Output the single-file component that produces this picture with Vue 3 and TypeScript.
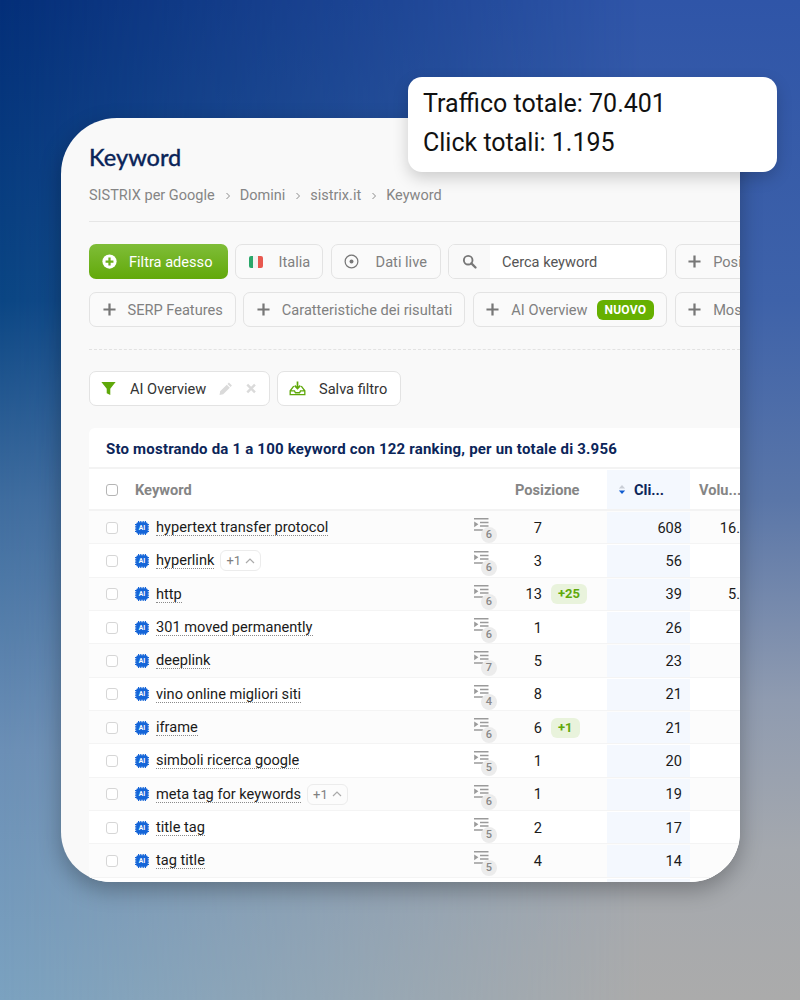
<template>
  <div class="page">
    <div class="tooltip">
      <div>Traffico totale: 70.401</div>
      <div>Click totali: 1.195</div>
    </div>

    <div class="card">
      <h1 class="title">Keyword</h1>
      <div class="crumbs">
        <template v-for="(c, i) in crumbs" :key="c">
          <svg v-if="i > 0" class="crumb-sep" viewBox="0 0 6 8"><path d="M1.5 1 4.5 4 1.5 7" /></svg>
          <span>{{ c }}</span>
        </template>
      </div>
      <div class="rule"></div>

      <div class="btn-row first">
        <button class="btn green">
          <svg class="ic" viewBox="0 0 16 16"><circle cx="8" cy="8" r="7.6" fill="#fff" /><path d="M8 3.8v8.4M3.8 8h8.4" stroke="#6cb01a" stroke-width="2.4" /></svg>
          Filtra adesso
        </button>
        <button class="btn w-italia">
          <span class="flag"><i class="fg"></i><i class="fw"></i><i class="fr"></i></span>
          Italia
        </button>
        <button class="btn w-live">
          <svg class="ic live" viewBox="0 0 16 16"><circle cx="8" cy="8" r="6.8" fill="none" stroke="#777" stroke-width="1.3" /><circle cx="8" cy="8" r="2.1" fill="#777" /></svg>
          Dati live
        </button>
        <div class="search">
          <div class="search-ic">
            <svg viewBox="0 0 16 16" width="15" height="15"><circle cx="6.6" cy="6.6" r="4.6" fill="none" stroke="#777" stroke-width="2" /><path d="M10 10l4.4 4.4" stroke="#777" stroke-width="2.4" stroke-linecap="round" /></svg>
          </div>
          <span>Cerca keyword</span>
        </div>
        <button class="btn">
          <svg class="ic plus" viewBox="0 0 14 14"><path d="M7 .5v13M.5 7h13" stroke="#777" stroke-width="2.4" /></svg>
          Posizione
        </button>
      </div>

      <div class="btn-row second">
        <button class="btn">
          <svg class="ic plus" viewBox="0 0 14 14"><path d="M7 .5v13M.5 7h13" stroke="#777" stroke-width="2.4" /></svg>
          SERP Features
        </button>
        <button class="btn">
          <svg class="ic plus" viewBox="0 0 14 14"><path d="M7 .5v13M.5 7h13" stroke="#777" stroke-width="2.4" /></svg>
          Caratteristiche dei risultati
        </button>
        <button class="btn">
          <svg class="ic plus" viewBox="0 0 14 14"><path d="M7 .5v13M.5 7h13" stroke="#777" stroke-width="2.4" /></svg>
          AI Overview
          <span class="nuovo">NUOVO</span>
        </button>
        <button class="btn">
          <svg class="ic plus" viewBox="0 0 14 14"><path d="M7 .5v13M.5 7h13" stroke="#777" stroke-width="2.4" /></svg>
          Mostra
        </button>
      </div>

      <div class="dashed"></div>

      <div class="btn-row chips">
        <div class="btn chip">
          <svg class="ic funnel" viewBox="0 0 16 16"><path d="M.4 1h15.2L9.9 8.2V15L6.1 13V8.2z" fill="#5fa80a" /></svg>
          <span class="chip-label">AI Overview</span>
          <svg class="tool pencil" viewBox="0 0 16 16"><path d="M11.3 1.2l3.5 3.5-1.6 1.6-3.5-3.5zM8.9 3.6l3.5 3.5-7.6 7.6-4.2.8.7-4.3z" fill="#dadada" /></svg>
          <svg class="tool cross" viewBox="0 0 12 12"><path d="M1.5 1.5l9 9M10.5 1.5l-9 9" stroke="#dadada" stroke-width="2.8" /></svg>
        </div>
        <div class="btn chip save">
          <svg class="ic inbox" viewBox="0 0 18 16"><path d="M9 .5v7M6 5l3 3 3-3" fill="none" stroke="#5fa80a" stroke-width="1.8" /><path d="M5 5.5 1.2 10.5v4h15.6v-4L13 5.5M1.2 10.5h4.6l1 2h4.4l1-2h4.6" fill="none" stroke="#5fa80a" stroke-width="1.4" /></svg>
          <span class="chip-label">Salva filtro</span>
        </div>
      </div>

      <div class="table">
        <div class="table-title">Sto mostrando da 1 a 100 keyword con 122 ranking, per un totale di 3.956</div>
        <div class="row head">
          <div class="c-check"><span class="box head-box"></span></div>
          <div class="c-kw">Keyword</div>
          <div class="c-list"></div>
          <div class="c-pos head-pos">Posizione</div>
          <div class="c-clicks head-clicks">
            <svg class="sort" viewBox="0 0 9 12"><path d="M4.5 1 8 5H1z" fill="#c9ced6" /><path d="M4.5 11 8 7H1z" fill="#0f5bd0" /></svg>
            <span>Cli...</span>
          </div>
          <div class="c-vol head-vol">Volu...</div>
        </div>
        <div v-for="(r, i) in rows" :key="r.kw" class="row" :class="{ alt: i % 2 === 0 }">
          <div class="c-check"><span class="box"></span></div>
          <div class="c-kw">
            <svg class="ai" viewBox="0 0 14 14">
              <path d="M3.6 0v14M5.8 0v14M8.2 0v14M10.4 0v14M0 3.6h14M0 5.8h14M0 8.2h14M0 10.4h14" stroke="#1565d8" stroke-width="1.2" />
              <rect x="1.2" y="1.2" width="11.6" height="11.6" rx="2" fill="#1565d8" />
              <text x="7" y="9.3" text-anchor="middle">AI</text>
            </svg>
            <span class="kw">{{ r.kw }}</span>
            <span v-if="r.more" class="more">
              +1
              <svg viewBox="0 0 10 6" width="10" height="6"><path d="M1 5l4-4 4 4" fill="none" stroke="#aaa" stroke-width="1.2" /></svg>
            </span>
          </div>
          <div class="c-list">
            <svg class="list" viewBox="0 0 15 13">
              <path d="M0 .75h14.5M6 4.5h8.5M6 8h8.5M0 12h9" stroke="#9a9a9a" stroke-width="1.5" />
              <path d="M.2 3.4 4.4 6.3.2 9.2z" fill="#9a9a9a" />
            </svg>
            <span class="count">{{ r.count }}</span>
          </div>
          <div class="c-pos">
            <span class="pos">{{ r.pos }}</span>
            <span v-if="r.delta" class="delta">{{ r.delta }}</span>
          </div>
          <div class="c-clicks">{{ r.clicks }}</div>
          <div class="c-vol">{{ r.vol }}</div>
        </div>
        <div class="row">
          <div class="c-check"></div>
          <div class="c-kw"></div>
          <div class="c-list"></div>
          <div class="c-pos"></div>
          <div class="c-clicks"></div>
          <div class="c-vol"></div>
        </div>
      </div>
    </div>
  </div>
</template>

<script setup lang="ts">
interface KeywordRow {
  kw: string
  count: number
  pos: number
  clicks: number
  delta?: string
  more?: boolean
  vol?: string
}

const crumbs = ['SISTRIX per Google', 'Domini', 'sistrix.it', 'Keyword']

const rows: KeywordRow[] = [
  { kw: 'hypertext transfer protocol', count: 6, pos: 7, clicks: 608, vol: '16.' },
  { kw: 'hyperlink', count: 6, pos: 3, clicks: 56, more: true },
  { kw: 'http', count: 6, pos: 13, clicks: 39, delta: '+25', vol: '5.' },
  { kw: '301 moved permanently', count: 6, pos: 1, clicks: 26 },
  { kw: 'deeplink', count: 7, pos: 5, clicks: 23 },
  { kw: 'vino online migliori siti', count: 4, pos: 8, clicks: 21 },
  { kw: 'iframe', count: 6, pos: 6, clicks: 21, delta: '+1' },
  { kw: 'simboli ricerca google', count: 5, pos: 1, clicks: 20 },
  { kw: 'meta tag for keywords', count: 6, pos: 1, clicks: 19, more: true },
  { kw: 'title tag', count: 5, pos: 2, clicks: 17 },
  { kw: 'tag title', count: 5, pos: 4, clicks: 14 }
]
</script>

<style scoped>
.page {
  position: relative;
  width: 800px;
  height: 1000px;
  overflow: hidden;
  padding: 118px 60px 0 61px;
  box-sizing: border-box;
  font-family: Roboto, "Liberation Sans", sans-serif;
  background: linear-gradient(180deg, #042f79 0%, #0b4684 30%, #3f6d9f 50%, #6b8fb6 75%, #7ba2c0 100%);
}

/* right hand side of the backdrop, faded in from the left */
.page::before {
  content: "";
  position: absolute;
  inset: 0;
  background: linear-gradient(180deg, #2f55a8 0%, #3e62a9 30%, #5a76a8 50%, #8f9bb0 70%, #a4a8ae 85%, #ababab 100%);
  -webkit-mask-image: linear-gradient(90deg, transparent 0%, #000 80%);
  mask-image: linear-gradient(90deg, transparent 0%, #000 80%);
}

.tooltip {
  position: absolute;
  left: 408px;
  top: 77px;
  width: 369px;
  height: 95px;
  box-sizing: border-box;
  padding: 8px 15px;
  background: #fff;
  border-radius: 14px;
  box-shadow: 0 6px 16px rgba(0, 0, 0, 0.18);
  color: #111;
  font-size: 25px;
  line-height: 38.5px;
  z-index: 2;
}

.card {
  position: relative;
  width: 679px;
  height: 764px;
  box-sizing: border-box;
  padding: 0 0 0 28px;
  overflow: hidden;
  background: #f9f9f9;
  border-radius: 56px 0 50px 50px;
  box-shadow: 0 8px 22px rgba(0, 0, 0, 0.28);
}

.title {
  margin: 25px 0 0;
  height: 29px;
  font-family: Lato, "Liberation Sans", sans-serif;
  font-size: 23.5px;
  line-height: 29px;
  font-weight: 500;
  -webkit-text-stroke: 0.3px #0b2559;
  color: #0b2559;
}

.crumbs {
  display: flex;
  align-items: center;
  margin-top: 14px;
  height: 18px;
  font-size: 14.5px;
  color: #858585;
  white-space: nowrap;
}

.crumb-sep {
  width: 6px;
  height: 8px;
  margin: 1px 9px 0 10px;
  fill: none;
  stroke: #8c8c8c;
  stroke-width: 1;
}

.rule {
  margin-top: 17px;
  height: 1px;
  background: #e6e6e6;
}

.btn-row {
  display: flex;
  gap: 7.5px;
  margin-top: 22px;
  white-space: nowrap;
}

.btn-row.first {
  gap: 7.3px;
}

.btn-row.second {
  margin-top: 13px;
}

.btn {
  flex: none;
  display: flex;
  align-items: center;
  height: 35px;
  box-sizing: border-box;
  padding: 0 12px 0 12.5px;
  background: #fafafa;
  border: 1.5px solid #e3e3e3;
  border-radius: 7px;
  font-family: inherit;
  font-size: 14.6px;
  color: #808080;
}

.btn.green {
  width: 139px;
  padding-left: 13px;
  background: linear-gradient(180deg, #7fbd38 0%, #62a90a 100%);
  border: 0;
  color: #fff;
}

.w-italia {
  width: 88px;
}

.w-live {
  width: 110px;
  padding-left: 12px;
}

.ic {
  flex: none;
  width: 15px;
  height: 15px;
  margin-right: 12px;
}

.ic.live {
  margin-right: 17px;
}

.ic.plus {
  width: 13px;
  height: 13px;
  margin-right: 12px;
}

.flag {
  display: flex;
  width: 17px;
  height: 12px;
  margin-right: 16px;
  border-radius: 2px;
  overflow: hidden;
}

.flag i {
  flex: 1;
}

.fg {
  background: #2aa76a;
}

.fw {
  background: #f2f2f2;
}

.fr {
  background: #e8584f;
}

.search {
  flex: none;
  display: flex;
  align-items: center;
  width: 219.5px;
  height: 35px;
  box-sizing: border-box;
  background: #fff;
  border: 1.5px solid #e3e3e3;
  border-radius: 7px;
  overflow: hidden;
  font-size: 14.6px;
  color: #555;
}

.search-ic {
  display: flex;
  align-items: center;
  justify-content: center;
  width: 41px;
  height: 100%;
  margin-right: 12px;
  background: #f9f9f9;
}

.nuovo {
  margin-left: 9px;
  padding: 0 8px;
  height: 20px;
  line-height: 20px;
  border-radius: 6px;
  background: #66b000;
  color: #fff;
  font-size: 12px;
  font-weight: 700;
  letter-spacing: 0.2px;
}

.dashed {
  margin-top: 22px;
  border-top: 1px dashed #e2e2e2;
}

.chips {
  margin-top: 21px;
}

.chip {
  background: #fff;
  width: 180.5px;
  padding-left: 11px;
}

.chip.save {
  width: 124px;
}

.chip-label {
  color: #333;
}

.funnel {
  margin-right: 14px;
}

.inbox {
  width: 17px;
  height: 15px;
  margin-right: 13px;
}

.tool.pencil {
  width: 15px;
  height: 15px;
  margin-left: 13px;
}

.tool.cross {
  width: 11px;
  height: 11px;
  margin-left: 13px;
}

.table {
  margin-top: 22px;
  background: #fff;
  border-radius: 6px 0 0 0;
}

.table-title {
  height: 39px;
  padding-left: 17px;
  border-bottom: 2px solid #f3f3f3;
  font-size: 15px;
  font-weight: 700;
  letter-spacing: 0.2px;
  line-height: 42px;
  color: #0b2559;
  white-space: nowrap;
}

.row {
  display: flex;
  height: 33.33px;
  box-sizing: border-box;
  padding-top: 1px;
  align-items: stretch;
  border-bottom: 1px solid #f4f4f4;
  font-size: 14.6px;
  color: #1a1a1a;
}

.row.alt {
  background: #fcfcfc;
}

.row.head {
  height: 42px;
  padding-top: 1px;
  border-bottom: 2px solid #f3f3f3;
  font-weight: 700;
  font-size: 14.6px;
  color: #858585;
}

.row > div {
  display: flex;
  align-items: center;
  flex: none;
}

.c-check {
  width: 46px;
  padding-left: 17px;
  box-sizing: border-box;
}

.box {
  width: 12px;
  height: 12px;
  box-sizing: border-box;
  border: 1.5px solid #d6d6d6;
  border-radius: 3px;
  background: #fff;
}

.head-box {
  border-color: #b5b5b5;
}

.c-kw {
  width: 339px;
}

.ai {
  flex: none;
  width: 14px;
  height: 14px;
  margin-right: 7px;
}

.ai text {
  font-family: Roboto, sans-serif;
  font-size: 6.6px;
  font-weight: 700;
  fill: #fff;
}

.kw {
  border-bottom: 1px dotted #8a8a8a;
  line-height: 16px;
  color: #1a1a1a;
}

.more {
  display: flex;
  align-items: center;
  gap: 4px;
  height: 19px;
  margin-left: 6px;
  padding: 0 5px 0 5px;
  border: 1px solid #ececec;
  border-radius: 6px;
  font-size: 13px;
  color: #808080;
}

.c-list {
  position: relative;
  width: 26px;
}

.list {
  position: absolute;
  left: 0;
  top: 6px;
  width: 15px;
  height: 13px;
}

.count {
  position: absolute;
  left: 7px;
  top: 15px;
  width: 16px;
  height: 16px;
  border-radius: 50%;
  background: #ececec;
  color: #888;
  font-size: 11px;
  font-weight: 500;
  line-height: 16px;
  text-align: center;
}

.c-pos {
  width: 107px;
}

.pos {
  width: 42px;
  text-align: right;
  flex: none;
}

.delta {
  margin-left: 9px;
  padding: 0 7px;
  height: 20px;
  line-height: 20px;
  border-radius: 6px;
  background: #e9f3dc;
  color: #5fa80a;
  font-size: 13px;
  font-weight: 700;
}

.head-pos {
  padding-left: 15px;
  box-sizing: border-box;
}

.c-clicks {
  width: 83px;
  box-sizing: border-box;
  padding-right: 8px;
  justify-content: flex-end;
  background: #f4f8fe;
}

.head-clicks {
  justify-content: flex-start;
  padding-left: 11px;
  color: #0b2559;
}

.sort {
  width: 8px;
  height: 11px;
  margin-right: 8px;
}

.c-vol {
  width: 50px;
  justify-content: flex-end;
  overflow: hidden;
  white-space: nowrap;
}

.head-vol {
  justify-content: flex-start;
  padding-left: 9px;
  box-sizing: border-box;
}
</style>
